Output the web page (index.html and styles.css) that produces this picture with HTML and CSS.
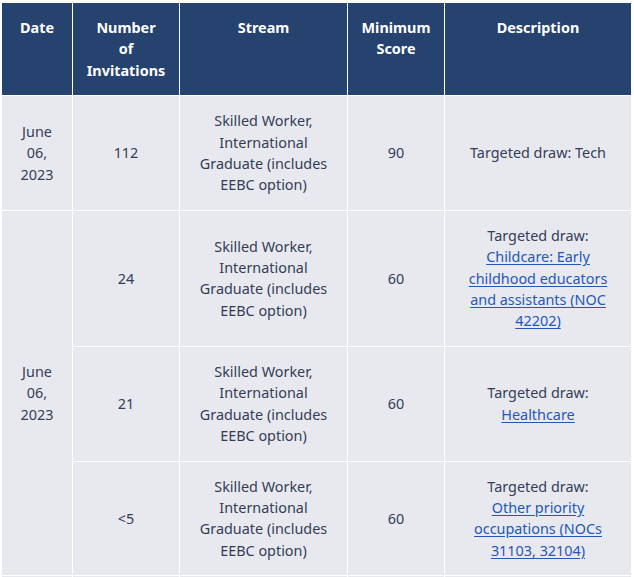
FILE: index.html
```html
<!DOCTYPE html>
<html lang="en">
<head>
<meta charset="utf-8">
<title>Rounds of invitations</title>
<link rel="stylesheet" href="styles.css">
</head>
<body>
<table class="rounds">
  <colgroup>
    <col class="c-date">
    <col class="c-num">
    <col class="c-stream">
    <col class="c-score">
    <col class="c-desc">
  </colgroup>
  <thead>
    <tr>
      <th>Date</th>
      <th>Number<br>of<br>Invitations</th>
      <th>Stream</th>
      <th>Minimum Score</th>
      <th>Description</th>
    </tr>
  </thead>
  <tbody>
    <tr>
      <td>June 06, 2023</td>
      <td>112</td>
      <td>Skilled Worker, International Graduate (includes EEBC option)</td>
      <td>90</td>
      <td>Targeted draw: Tech</td>
    </tr>
    <tr>
      <td rowspan="3">June 06, 2023</td>
      <td>24</td>
      <td>Skilled Worker, International Graduate (includes EEBC option)</td>
      <td>60</td>
      <td>Targeted draw:<br><a href="#">Childcare: Early childhood educators and assistants (NOC 42202)</a></td>
    </tr>
    <tr>
      <td>21</td>
      <td>Skilled Worker, International Graduate (includes EEBC option)</td>
      <td>60</td>
      <td>Targeted draw:<br><a href="#">Healthcare</a></td>
    </tr>
    <tr>
      <td>&lt;5</td>
      <td>Skilled Worker, International Graduate (includes EEBC option)</td>
      <td>60</td>
      <td>Targeted draw:<br><a href="#">Other priority occupations (NOCs 31103, 32104)</a></td>
    </tr>
    <tr class="next">
      <td>&nbsp;</td>
      <td>&nbsp;</td>
      <td>&nbsp;</td>
      <td>&nbsp;</td>
      <td>&nbsp;</td>
    </tr>
  </tbody>
</table>
</body>
</html>
```

FILE: styles.css
```css
html, body {
  margin: 0;
  padding: 0;
  background: #ffffff;
}

body {
  font-family: "Noto Sans", "Open Sans", sans-serif;
  font-size: 14.4px;
  line-height: 21.4px;
  color: #333d58;
}

.rounds {
  margin: 2px 0 0 1px;
  width: 631px;
  table-layout: fixed;
  border-collapse: separate;
  border-spacing: 1px;
  background: #ffffff;
}

.c-date { width: 70px; }
.c-num { width: 106px; }
.c-stream { width: 167px; }
.c-score { width: 96px; }
.c-desc { width: 186px; }

.rounds th {
  background: #26426f;
  color: #ffffff;
  font-weight: 700;
  text-align: center;
  vertical-align: top;
  padding: 14px 12px;
}

.rounds td {
  background: #e8e9ef;
  text-align: center;
  vertical-align: middle;
  padding: 14px 12px;
}

.rounds a {
  color: #2557b8;
  text-decoration: underline;
  text-underline-offset: 2px;
}
```
